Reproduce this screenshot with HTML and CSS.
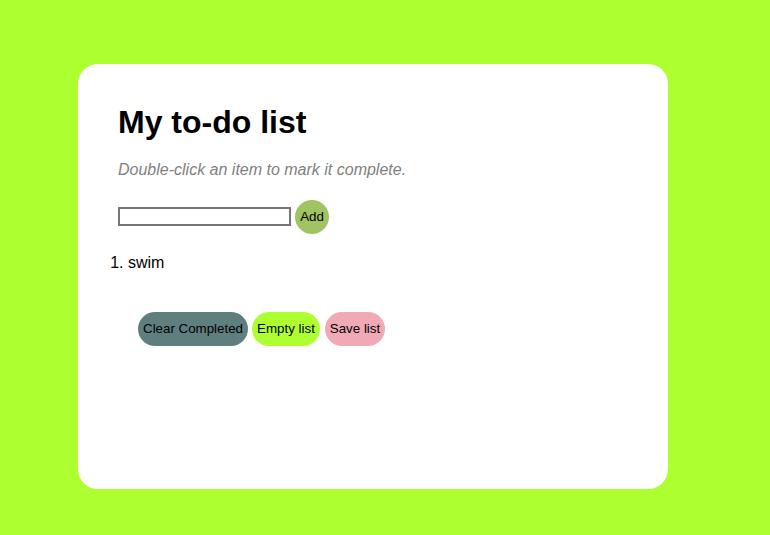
FILE: index.html
```html
<!DOCTYPE html>
<html>
<head>
<meta charset="utf-8">
<link rel="stylesheet" href="styles.css">
</head>
<body>
<div class="card">
  <h1 class="title">My to-do list</h1>
  <p class="hint">Double-click an item to mark it complete.</p>
  <div class="entry">
    <input class="field" type="text">
    <button class="btn add">Add</button>
  </div>
  <ol class="items">
    <li>swim</li>
  </ol>
  <div class="actions">
    <button class="btn clear">Clear Completed</button>
    <button class="btn empty">Empty list</button>
    <button class="btn save">Save list</button>
  </div>
</div>
</body>
</html>
```
FILE: styles.css
```css
html, body {
  margin: 0;
  padding: 0;
}
body {
  background: #adff2f;
  font-family: "Liberation Sans", Arial, sans-serif;
  padding: 64px 0 0 78px;
  height: 535px;
  box-sizing: border-box;
  overflow: hidden;
}
.card {
  width: 590px;
  height: 425px;
  box-sizing: border-box;
  background: #fff;
  border-radius: 20px;
  padding: 19px 40px 16px;
}
.title {
  font-size: 32px;
  font-weight: bold;
  margin: 21.44px 0 19.5px;
  color: #000;
}
.hint {
  font-style: italic;
  color: #808080;
  font-size: 16px;
  margin: 0 0 21px;
}
.entry {
  display: flex;
  align-items: center;
  gap: 4px;
}
.field {
  width: 173px;
  height: 19px;
  box-sizing: border-box;
  border: 2px solid #767676;
  padding: 1px 2px;
  margin: 0;
}
.btn {
  font-family: "Liberation Sans", Arial, sans-serif;
  font-size: 13.33px;
  color: #000;
  border: none;
  height: 34px;
  border-radius: 17px;
  padding: 0 5px;
  margin: 0;
  white-space: nowrap;
}
.add {
  background: #a0c462;
  width: 34px;
  padding: 0;
}
.items {
  margin: 20px 0 0;
  padding-left: 10px;
  font-size: 16px;
}
.actions {
  display: flex;
  gap: 4px;
  margin-top: 40px;
  padding-left: 20px;
}
.clear {
  background: #5f7f7f;
  width: 110px;
}
.empty {
  background: #adff2f;
  width: 68px;
}
.save {
  background: #efaab5;
  width: 60px;
  padding: 0;
  margin-left: 1px;
}
```
